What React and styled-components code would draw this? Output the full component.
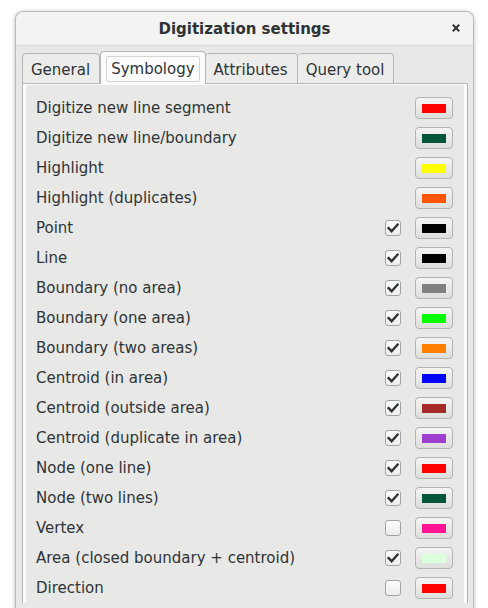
import React from "react";
import styled, { createGlobalStyle } from "styled-components";

const GlobalStyle = createGlobalStyle`
  html, body {
    margin: 0;
    padding: 0;
    background: #ffffff;
  }
  body {
    font-family: "DejaVu Sans", "Noto Sans", sans-serif;
    font-size: 15px;
    color: #2e3436;
  }
`;

const Window = styled.div`
  margin: 11px 0 0 15px;
  width: 459px;
  height: 620px;
  box-sizing: border-box;
  border: 1px solid #b9b9b7;
  border-bottom: none;
  border-radius: 8px 8px 0 0;
  background: #e8e8e7;
  box-shadow: 0 1px 5px rgba(0, 0, 0, 0.25);
  overflow: hidden;
`;

const TitleBar = styled.div`
  height: 33px;
  display: flex;
  align-items: center;
  justify-content: center;
  position: relative;
  background: #f3f3f2;
  border-bottom: 1px solid #dcdcda;
  font-weight: bold;
  font-size: 15px;
`;

const CloseButton = styled.div`
  position: absolute;
  right: 13px;
  top: 12px;
  width: 8px;
  height: 8px;
  display: flex;
`;

const Body = styled.div`
  padding: 6px 5px 0 6px;
`;

const TabBar = styled.div`
  display: flex;
  align-items: flex-end;
  height: 32px;
  margin-bottom: -1px;
  position: relative;
  z-index: 1;
`;

const Tab = styled.div`
  box-sizing: border-box;
  height: ${(p) => (p.$active ? "33px" : "31px")};
  padding: ${(p) => (p.$active ? "4px 5px 0" : "2px 9px 0 8px")};
  display: flex;
  align-items: ${(p) => (p.$active ? "flex-start" : "center")};
  border: 1px solid #b5b5b3;
  border-bottom: ${(p) => (p.$active ? "none" : "1px solid #b5b5b3")};
  border-left: ${(p) => (p.$first || p.$active ? "1px solid #b5b5b3" : "none")};
  border-radius: 4px 4px 0 0;
  background: ${(p) => (p.$active ? "#fbfbfb" : "#ececeb")};
  white-space: nowrap;
`;

const FocusLabel = styled.div`
  height: 26px;
  box-sizing: border-box;
  padding: 0 4px;
  display: flex;
  align-items: center;
  border: 1px solid #d3d3d1;
  border-radius: 2px;
`;

const Panel = styled.div`
  border: 1px solid #b5b5b3;
  border-bottom: none;
  background: #fbfbfb;
  padding: 1px 3px 0 3px;
`;

const List = styled.div`
  background: #e8e8e7;
  padding-top: 8px;
`;

const Row = styled.div`
  height: 30px;
  display: flex;
  align-items: center;
  padding: 0 11px 0 10px;
  gap: 14px;
`;

const Label = styled.div`
  flex: 1;
  white-space: nowrap;
  margin-top: -1px;
`;

const CheckSlot = styled.div`
  width: 16px;
  height: 16px;
`;

const CheckBox = styled.div`
  width: 16px;
  height: 16px;
  box-sizing: border-box;
  border: 1px solid #a3a3a1;
  border-radius: 3px;
  background: linear-gradient(#fdfdfd, #ededec);
  display: flex;
  align-items: center;
  justify-content: center;
`;

const ColorButton = styled.div`
  width: 38px;
  height: 22px;
  box-sizing: border-box;
  border: 1px solid #b3b3b1;
  border-radius: 4px;
  background: linear-gradient(#f4f4f3, #dededd);
  display: flex;
  align-items: center;
  justify-content: center;
`;

const Swatch = styled.div`
  width: 24px;
  height: 9px;
  background: ${(p) => p.$color};
`;

const rows = [
  { label: "Digitize new line segment", color: "#ff0000" },
  { label: "Digitize new line/boundary", color: "#00553a" },
  { label: "Highlight", color: "#ffff00" },
  { label: "Highlight (duplicates)", color: "#ff5500" },
  { label: "Point", color: "#000000", check: true },
  { label: "Line", color: "#000000", check: true },
  { label: "Boundary (no area)", color: "#808080", check: true },
  { label: "Boundary (one area)", color: "#00ff00", check: true },
  { label: "Boundary (two areas)", color: "#ff8000", check: true },
  { label: "Centroid (in area)", color: "#0000ff", check: true },
  { label: "Centroid (outside area)", color: "#a52a2a", check: true },
  { label: "Centroid (duplicate in area)", color: "#9f3fd0", check: true },
  { label: "Node (one line)", color: "#ff0000", check: true },
  { label: "Node (two lines)", color: "#00553a", check: true },
  { label: "Vertex", color: "#ff1493", check: false },
  { label: "Area (closed boundary + centroid)", color: "#dcffdc", check: true },
  { label: "Direction", color: "#ff0000", check: false },
];

const tabs = ["General", "Symbology", "Attributes", "Query tool"];

const Tick = () => (
  <svg width="12" height="12" viewBox="0 0 12 12">
    <path
      d="M1.6 6.2 L4.6 9.2 L10.6 2.6"
      fill="none"
      stroke="#2e3436"
      strokeWidth="2.4"
      strokeLinecap="square"
      strokeLinejoin="miter"
    />
  </svg>
);

export default function App() {
  return (
    <>
      <GlobalStyle />
      <Window>
        <TitleBar>
          Digitization settings
          <CloseButton>
            <svg width="8" height="8" viewBox="0 0 8 8">
              <path
                d="M0.8 0.8 L7.2 7.2 M7.2 0.8 L0.8 7.2"
                stroke="#2e3436"
                strokeWidth="2"
              />
            </svg>
          </CloseButton>
        </TitleBar>
        <Body>
          <TabBar>
            {tabs.map((t, i) =>
              t === "Symbology" ? (
                <Tab key={t} $active>
                  <FocusLabel>{t}</FocusLabel>
                </Tab>
              ) : (
                <Tab key={t} $first={i === 0}>
                  {t}
                </Tab>
              )
            )}
          </TabBar>
          <Panel>
            <List>
              {rows.map((r) => (
                <Row key={r.label}>
                  <Label>{r.label}</Label>
                  {r.check === undefined ? (
                    <CheckSlot />
                  ) : (
                    <CheckBox>{r.check && <Tick />}</CheckBox>
                  )}
                  <ColorButton>
                    <Swatch $color={r.color} />
                  </ColorButton>
                </Row>
              ))}
            </List>
          </Panel>
        </Body>
      </Window>
    </>
  );
}
